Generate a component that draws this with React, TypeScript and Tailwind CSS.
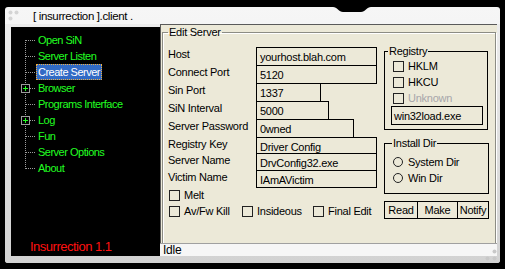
import React from "react";

type TreeItem = { label: string; selected?: boolean; expandable?: boolean };

const treeItems: TreeItem[] = [
  { label: "Open SiN" },
  { label: "Server Listen" },
  { label: "Create Server", selected: true },
  { label: "Browser", expandable: true },
  { label: "Programs Interface" },
  { label: "Log", expandable: true },
  { label: "Fun" },
  { label: "Server Options" },
  { label: "About" },
];

type Field = { label: string; value: string; w: string; h: string };

const fields: Field[] = [
  { label: "Host", value: "yourhost.blah.com", w: "w-[121px]", h: "h-[19px]" },
  { label: "Connect Port", value: "5120", w: "w-[121px]", h: "h-[19px]" },
  { label: "Sin Port", value: "1337", w: "w-[65px]", h: "h-[19px]" },
  { label: "SiN Interval", value: "5000", w: "w-[73px]", h: "h-[19px]" },
  { label: "Server Password", value: "0wned", w: "w-[98px]", h: "h-[19px]" },
  { label: "Registry Key", value: "Driver Config", w: "w-[121px]", h: "h-[17px]" },
  { label: "Server Name", value: "DrvConfig32.exe", w: "w-[121px]", h: "h-[18px]" },
  { label: "Victim Name", value: "IAmAVictim", w: "w-[121px]", h: "h-[18px]" },
];

function TreeRow({ item, index, last }: { item: TreeItem; index: number; last: boolean }) {
  return (
    <div className="flex h-4 items-center">
      <svg width="25" height="16" className="shrink-0">
        <line x1="14.5" y1={index === 0 ? 8 : 0} x2="14.5" y2={last ? 9 : 16} stroke="#9c9c9c" strokeDasharray="1 1" />
        <line x1="15" y1="8.5" x2="25" y2="8.5" stroke="#9c9c9c" strokeDasharray="1 1" />
        {item.expandable && (
          <>
            <rect x="10.5" y="4.5" width="8" height="8" fill="black" stroke="#9c9c9c" />
            <line x1="12" y1="8.5" x2="17" y2="8.5" stroke="#22ff22" />
            <line x1="14.5" y1="6" x2="14.5" y2="11" stroke="#22ff22" />
          </>
        )}
      </svg>
      <span
        className={
          item.selected
            ? "border border-dotted border-[#f0b040] bg-[#316ac5] px-px leading-[14px] text-white"
            : "px-[2px] leading-[14px] text-[#22ff22]"
        }
      >
        {item.label}
      </span>
    </div>
  );
}

function Check({ label, disabled }: { label: string; disabled?: boolean }) {
  return (
    <div className="flex h-4 items-center">
      <span className="h-[11px] w-[11px] shrink-0 border border-[#222]" />
      <span className={disabled ? "ml-[4px] text-[#a7a6aa]" : "ml-[4px] text-black"}>{label}</span>
    </div>
  );
}

function Radio({ label }: { label: string }) {
  return (
    <div className="flex h-4 items-center">
      <span className="h-[10px] w-[10px] shrink-0 rounded-full border border-[#222]" />
      <span className="ml-[5px]">{label}</span>
    </div>
  );
}

function EditServer() {
  return (
    <fieldset className="h-[219px] border border-[#8c8c84] shadow-[inset_1px_1px_0_#fff,1px_1px_0_#fff]">
      <legend className="ml-[5px] px-px leading-[14px]">Edit Server</legend>
      <div className="flex">
        <div className="w-[221px] pl-[5px] pt-[8px]">
          {fields.map((f, i) => (
            <div key={f.label} className={i === 0 ? "flex" : "-mt-px flex"}>
              <span className="w-[88px] leading-[14px]">{f.label}</span>
              <div className={`${f.w} ${f.h} border border-black pl-[3px] pt-[2px] leading-[14px]`}>{f.value}</div>
            </div>
          ))}
          <div className="-mt-[1px] ml-px">
            <Check label="Melt" />
            <div className="flex">
              <div className="w-[73px]">
                <Check label="Av/Fw Kill" />
              </div>
              <div className="w-[71px]">
                <Check label="Insideous" />
              </div>
              <Check label="Final Edit" />
            </div>
          </div>
        </div>
        <div className="w-[104px]">
          <fieldset className="mt-[5px] h-[86px] border border-black">
            <legend className="ml-[3px] px-px leading-[14px]">Registry</legend>
            <div className="pl-[8px]">
              <Check label="HKLM" />
              <Check label="HKCU" />
              <Check label="Unknown" disabled />
            </div>
            <div className="ml-[6px] h-[19px] w-[92px] border border-black pl-[2px] pt-[2px] leading-[14px]">win32load.exe</div>
          </fieldset>
          <fieldset className="mt-[6px] h-[58px] w-[105px] border border-black">
            <legend className="ml-[7px] px-px leading-[14px]">Install Dir</legend>
            <div className="pl-[8px] pt-[4px]">
              <Radio label="System Dir" />
              <Radio label="Win Dir" />
            </div>
          </fieldset>
          <div className="mt-[7px] flex h-[18px] w-[105px] border border-black leading-[16px]">
            <span className="w-[32px] text-center">Read</span>
            <span className="w-[40px] border-l border-black text-center">Make</span>
            <span className="flex-1 border-l border-black text-center">Notify</span>
          </div>
        </div>
      </div>
    </fieldset>
  );
}

export default function App() {
  return (
    <div className="h-[269px] w-[505px] bg-black pl-[5px] pt-[7px] font-['Liberation_Sans',Arial,sans-serif] text-[11px] tracking-[-0.25px] text-black">
      <div className="relative flex h-[256px] w-[495px] flex-col overflow-hidden rounded-[3px] bg-linear-to-b from-[#f6f6f6] to-[#e4e4e4]">
        <div className="flex h-[17px] items-center">
          <svg width="28" height="17" className="shrink-0">
            <circle cx="5.5" cy="5.5" r="2" fill="#d4d4d4" />
            <circle cx="11.5" cy="5.5" r="2" fill="#d4d4d4" />
            <circle cx="5.5" cy="11.5" r="2" fill="#d4d4d4" />
          </svg>
          <span className="pt-[3px] text-[11.5px] tracking-[-0.35px]">[ insurrection ].client .</span>
        </div>
        <div className="flex flex-1 bg-linear-to-b from-[#ececec] to-[#d2d2d2] pb-[7px] pl-[6px] pr-[3px]">
          <div className="mt-[3px] flex w-[149px] flex-col bg-black pt-[5px] tracking-[-0.5px]">
            {treeItems.map((item, i) => (
              <TreeRow key={item.label} item={item} index={i} last={i === treeItems.length - 1} />
            ))}
            <div className="mt-auto pb-[1px] pl-[19px] text-[13px] leading-[16px] text-[#ff1010]">Insurrection 1.1</div>
          </div>
          <div className="flex w-[337px] flex-col">
            <div className="h-[219px] border-l border-t border-[#5a5a5a] bg-[#ece9d8] pl-[1px] pr-[1px]">
              <EditServer />
            </div>
            <div className="h-[13px] border-t border-[#a0a0a0] bg-[#f6f6f6] pl-[3px] text-[12px] leading-[12px]">Idle</div>
          </div>
        </div>
        <svg width="38" height="6" className="absolute left-[328px] top-0">
          <path d="M0 0 C4 0 6 5 10 5 L28 5 C32 5 34 0 38 0 Z" fill="black" />
        </svg>
        <svg width="16" height="16" className="absolute bottom-0 right-0">
          <circle cx="10.5" cy="4.5" r="2" fill="#c8c8c8" />
          <circle cx="3.5" cy="11.5" r="2" fill="#c8c8c8" />
          <circle cx="10.5" cy="11.5" r="2" fill="#c8c8c8" />
        </svg>
      </div>
    </div>
  );
}
